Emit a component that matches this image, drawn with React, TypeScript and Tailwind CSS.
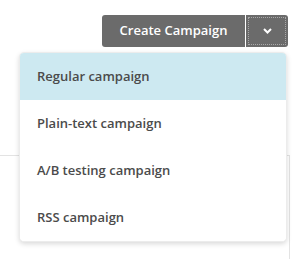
const items = ['Regular campaign', 'Plain-text campaign', 'A/B testing campaign', 'RSS campaign']

export default function App() {
  return (
    <div className="relative h-[259px] w-[296px] overflow-hidden bg-white font-['Open_Sans',sans-serif]">
      {/* Button group */}
      <div className="flex justify-end pr-[8px] pt-[15px]">
        <div className="flex h-[32px] overflow-hidden rounded-[3px] bg-[#6b6b6b]">
          <button className="w-[143px] text-[13px] font-semibold text-white">Create Campaign</button>
          <div className="w-px bg-white" />
          <button className="flex w-[42px] items-center justify-center p-[2px]">
            <span className="flex h-full w-full items-center justify-center border border-dotted border-[#a8a8a8]">
              <svg width="9" height="6" viewBox="0 0 9 6" fill="none">
                <path d="M1 1l3.5 3.5L8 1" stroke="white" strokeWidth="2" />
              </svg>
            </span>
          </button>
        </div>
      </div>

      {/* Panel behind menu */}
      <div className="mt-[108px] h-[120px] w-[290px] border-r border-t border-[#e3e3e3]" />

      {/* Menu */}
      <div className="absolute left-[19px] top-[52px] w-[268px] overflow-hidden rounded-[5px] border border-[#ececec] bg-white shadow-[0_2px_5px_rgba(0,0,0,0.15)]">
        {items.map((label, i) => (
          <div
            key={label}
            className={
              'flex h-[47px] items-center pl-[17px] text-[13px] font-semibold text-[#4b4b4b] ' +
              (i === 0 ? 'bg-[#cde9f1]' : 'bg-white')
            }
          >
            {label}
          </div>
        ))}
      </div>
    </div>
  )
}
